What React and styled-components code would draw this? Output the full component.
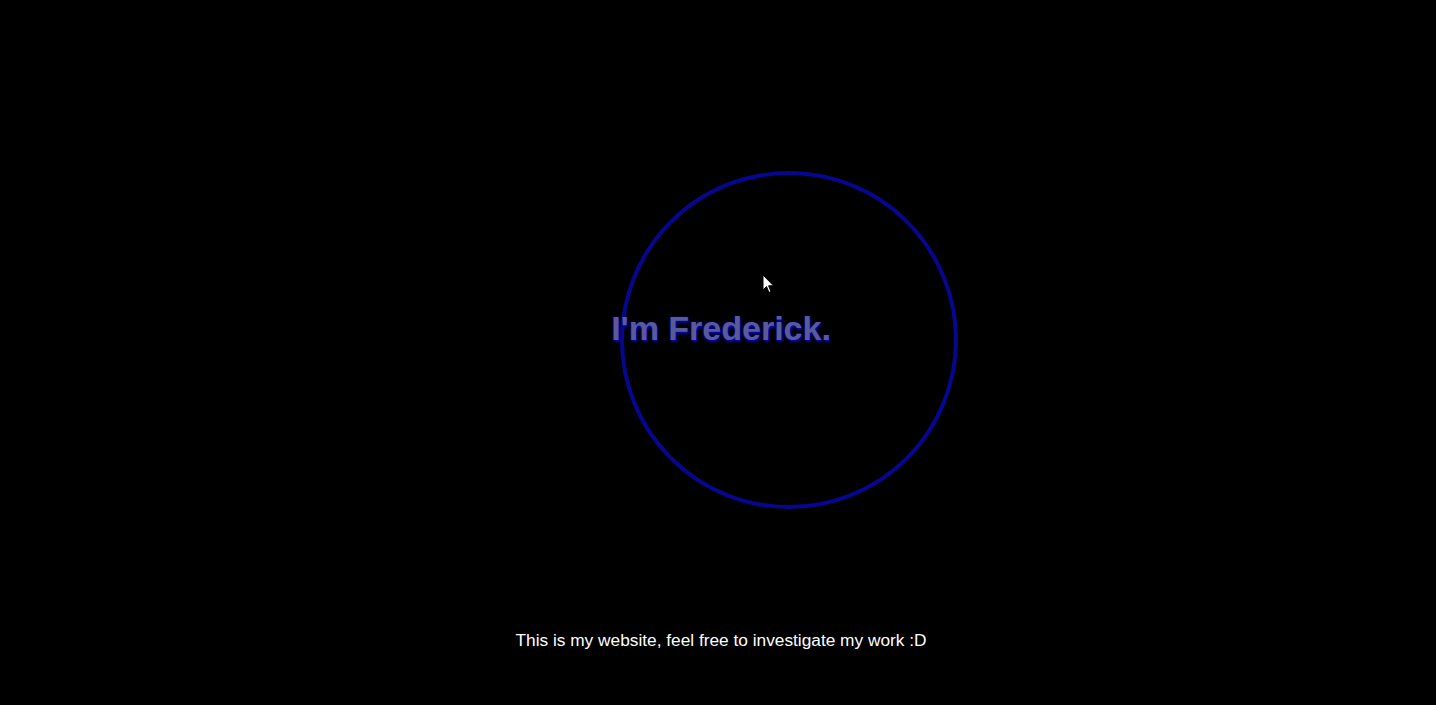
import React from "react";
import styled, { createGlobalStyle } from "styled-components";

const GlobalStyle = createGlobalStyle`
  html, body {
    margin: 0;
    padding: 0;
    background: #000;
  }
  body {
    font-family: "Liberation Sans", Arial, sans-serif;
  }
`;

const Page = styled.main`
  position: relative;
  min-height: 100vh;
  background: #000;
  display: flex;
  flex-direction: column;
  align-items: center;
  padding: 309px 0 0 6px;
  box-sizing: border-box;
  overflow: hidden;
`;

const Ring = styled.div`
  position: absolute;
  left: ${({ x }) => x}px;
  top: ${({ y }) => y}px;
  width: ${({ size }) => size}px;
  height: ${({ size }) => size}px;
  box-sizing: border-box;
  border: 4px solid #06068e;
  border-radius: 50%;
  pointer-events: none;
`;

const Title = styled.h1`
  position: relative;
  margin: 0;
  font-size: 34px;
  line-height: 39px;
  font-weight: 700;
  color: #5a5a98;
  text-shadow: 0 0 2px #0808d0, 1px 2px 2px #0606a8;
`;

const Tagline = styled.p`
  margin: 282px 0 0;
  font-size: 17.3px;
  line-height: 20px;
  color: #fff;
`;

const Cursor = styled.svg`
  position: absolute;
  left: 762px;
  top: 274px;
`;

export default function App() {
  return (
    <>
      <GlobalStyle />
      <Page>
        <Ring x={620} y={171} size={338} />
        <Title>I'm Frederick.</Title>
        <Tagline>This is my website, feel free to investigate my work :D</Tagline>
        <Cursor width="14" height="22" viewBox="0 0 14 22">
          <path
            d="M1 1 L1 16 L4.5 12.5 L7 18.5 L9 17.6 L6.6 11.8 L11.5 11.8 Z"
            fill="#fff"
            stroke="#000"
            strokeWidth="1"
          />
        </Cursor>
      </Page>
    </>
  );
}
